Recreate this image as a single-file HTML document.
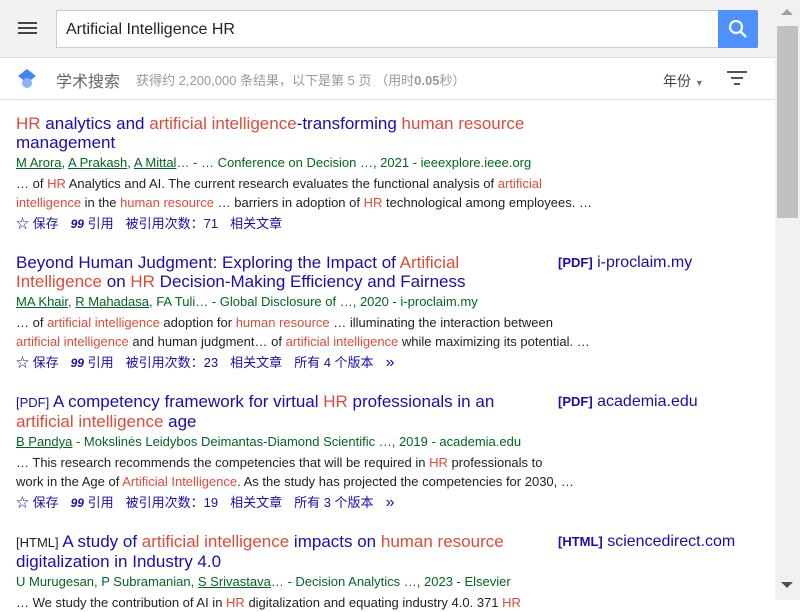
<!DOCTYPE html>
<html><head><meta charset="utf-8">
<style>
*{margin:0;padding:0;box-sizing:border-box}
body{width:800px;height:600px;overflow:hidden;background:#fff;font-family:"Liberation Sans","Noto Sans CJK SC",sans-serif;position:relative}
.hdr{position:absolute;left:0;top:0;width:775px;height:58px;background:#f2f2f2;border-bottom:1px solid #e0e0e0}
.menu{position:absolute;left:18px;top:22px;width:19px}
.menu i{display:block;height:2px;background:#444;margin-bottom:3px}
.sb{position:absolute;left:56px;top:10px;width:662px;height:38px;background:#fff;border:1px solid #ccc;border-right:none;font-size:16px;color:#222;padding:10px 0 0 9px}
.btn{position:absolute;left:718px;top:10px;width:40px;height:38px;background:#4d90fe;border-radius:0 2px 2px 0}
.bar2{position:absolute;left:0;top:58px;width:775px;height:42px;border-bottom:1px solid #ddd}
.logo{position:absolute;left:17px;top:68px}
.xs{position:absolute;left:56px;top:68px;font-size:16px;color:#666}
.stat{position:absolute;left:136px;top:70px;font-size:13px;color:#999}
.yr{position:absolute;left:663px;top:71px;font-size:14px;color:#444}
.scroll{position:absolute;left:775px;top:0;width:25px;height:600px;background:#f1f1f1}
.thumb{position:absolute;left:777px;top:26px;width:21px;height:192px;background:#c1c1c1}
.r{position:absolute;left:16px;width:580px}
.t{font-size:17px;line-height:19px;color:#1a0dab;width:530px}
.t .tag{font-size:13px}
.h{color:#dd4b39}
.a{font-size:13px;color:#006621;line-height:19px;margin-top:1px;white-space:nowrap}
.a u{color:#006621}
.s{font-size:13px;color:#222;line-height:19px;margin-top:2px;white-space:nowrap}
.f{font-size:13px;color:#1a0dab;line-height:19px;margin-top:2px;white-space:nowrap}
.f>span{margin-right:12px}
.q{font-weight:bold;font-style:italic;font-size:12px}
.side{position:absolute;left:558px;font-size:16px;color:#1a0dab}
.side b{font-size:13px}
</style></head><body>
<div class="hdr"></div>
<div class="menu"><i></i><i></i><i></i></div>
<div class="sb">Artificial Intelligence HR</div>
<div class="btn"><svg width="40" height="38"><circle cx="18" cy="17" r="6" fill="none" stroke="#fff" stroke-width="2.2"/><line x1="22.5" y1="21.5" x2="28" y2="27" stroke="#fff" stroke-width="2.6"/></svg></div>
<div class="bar2"></div>
<svg class="logo" width="22" height="22"><polygon points="1,8 10,1 19,8 10,15" fill="#4285f4"/><circle cx="10" cy="15" r="5" fill="#8ab4f8"/></svg>
<div class="xs">学术搜索</div>
<div class="stat">获得约 2,200,000 条结果，以下是第 5 页 （用时<b>0.05</b>秒）</div>
<div class="yr">年份 <span style="font-size:9px;color:#777">▼</span></div>
<svg style="position:absolute;left:727px;top:70px" width="22" height="16"><rect x="0" y="1" width="20" height="2" fill="#555"/><rect x="4" y="7" width="12" height="2" fill="#555"/><rect x="7" y="13" width="6" height="2" fill="#555"/></svg>
<div class="scroll"></div><div class="thumb"></div>
<svg style="position:absolute;left:781px;top:8px" width="12" height="8"><polygon points="0,7 6,1 12,7" fill="#a0a0a0"/></svg>
<svg style="position:absolute;left:781px;top:581px" width="12" height="8"><polygon points="0,1 6,7 12,1" fill="#505050"/></svg>

<div class="r" style="top:114px">
<div class="t"><span class="h">HR</span> analytics and <span class="h">artificial intelligence</span>-transforming <span class="h">human resource</span> management</div>
<div class="a"><u>M Arora</u>, <u>A Prakash</u>, <u>A Mittal</u>… - … Conference on Decision …, 2021 - ieeexplore.ieee.org</div>
<div class="s">… of <span class="h">HR</span> Analytics and AI. The current research evaluates the functional analysis of <span class="h">artificial</span><br><span class="h">intelligence</span> in the <span class="h">human resource</span> … barriers in adoption of <span class="h">HR</span> technological among employees. …</div>
<div class="f"><span>☆ 保存</span><span><b class="q">99</b> 引用</span><span>被引用次数：71</span><span>相关文章</span></div>
</div>

<div class="r" style="top:253px">
<div class="t">Beyond Human Judgment: Exploring the Impact of <span class="h">Artificial</span><br><span class="h">Intelligence</span> on <span class="h">HR</span> Decision-Making Efficiency and Fairness</div>
<div class="a"><u>MA Khair</u>, <u>R Mahadasa</u>, FA Tuli… - Global Disclosure of …, 2020 - i-proclaim.my</div>
<div class="s">… of <span class="h">artificial intelligence</span> adoption for <span class="h">human resource</span> … illuminating the interaction between<br><span class="h">artificial intelligence</span> and human judgment… of <span class="h">artificial intelligence</span> while maximizing its potential. …</div>
<div class="f"><span>☆ 保存</span><span><b class="q">99</b> 引用</span><span>被引用次数：23</span><span>相关文章</span><span>所有 4 个版本</span><span style="font-size:16px">»</span></div>
</div>
<div class="side" style="top:254px"><b>[PDF]</b> i-proclaim.my</div>

<div class="r" style="top:392px">
<div class="t"><span class="tag">[PDF]</span> A competency framework for virtual <span class="h">HR</span> professionals in an<br><span class="h">artificial intelligence</span> age</div>
<div class="a"><u>B Pandya</u> - Mokslinės Leidybos Deimantas-Diamond Scientific …, 2019 - academia.edu</div>
<div class="s">… This research recommends the competencies that will be required in <span class="h">HR</span> professionals to<br>work in the Age of <span class="h">Artificial Intelligence</span>. As the study has projected the competencies for 2030, …</div>
<div class="f"><span>☆ 保存</span><span><b class="q">99</b> 引用</span><span>被引用次数：19</span><span>相关文章</span><span>所有 3 个版本</span><span style="font-size:16px">»</span></div>
</div>
<div class="side" style="top:393px"><b>[PDF]</b> academia.edu</div>

<div class="r" style="top:532px">
<div class="t"><span class="tag" style="color:#222">[HTML]</span> A study of <span class="h">artificial intelligence</span> impacts on <span class="h">human resource</span><br>digitalization in Industry 4.0</div>
<div class="a" style="color:#006621">U Murugesan, P Subramanian, <u>S Srivastava</u>… - Decision Analytics …, 2023 - Elsevier</div>
<div class="s">… We study the contribution of AI in <span class="h">HR</span> digitalization and equating industry 4.0. 371 <span class="h">HR</span></div>
</div>
<div class="side" style="top:533px"><b>[HTML]</b> sciencedirect.com</div>
</body></html>
